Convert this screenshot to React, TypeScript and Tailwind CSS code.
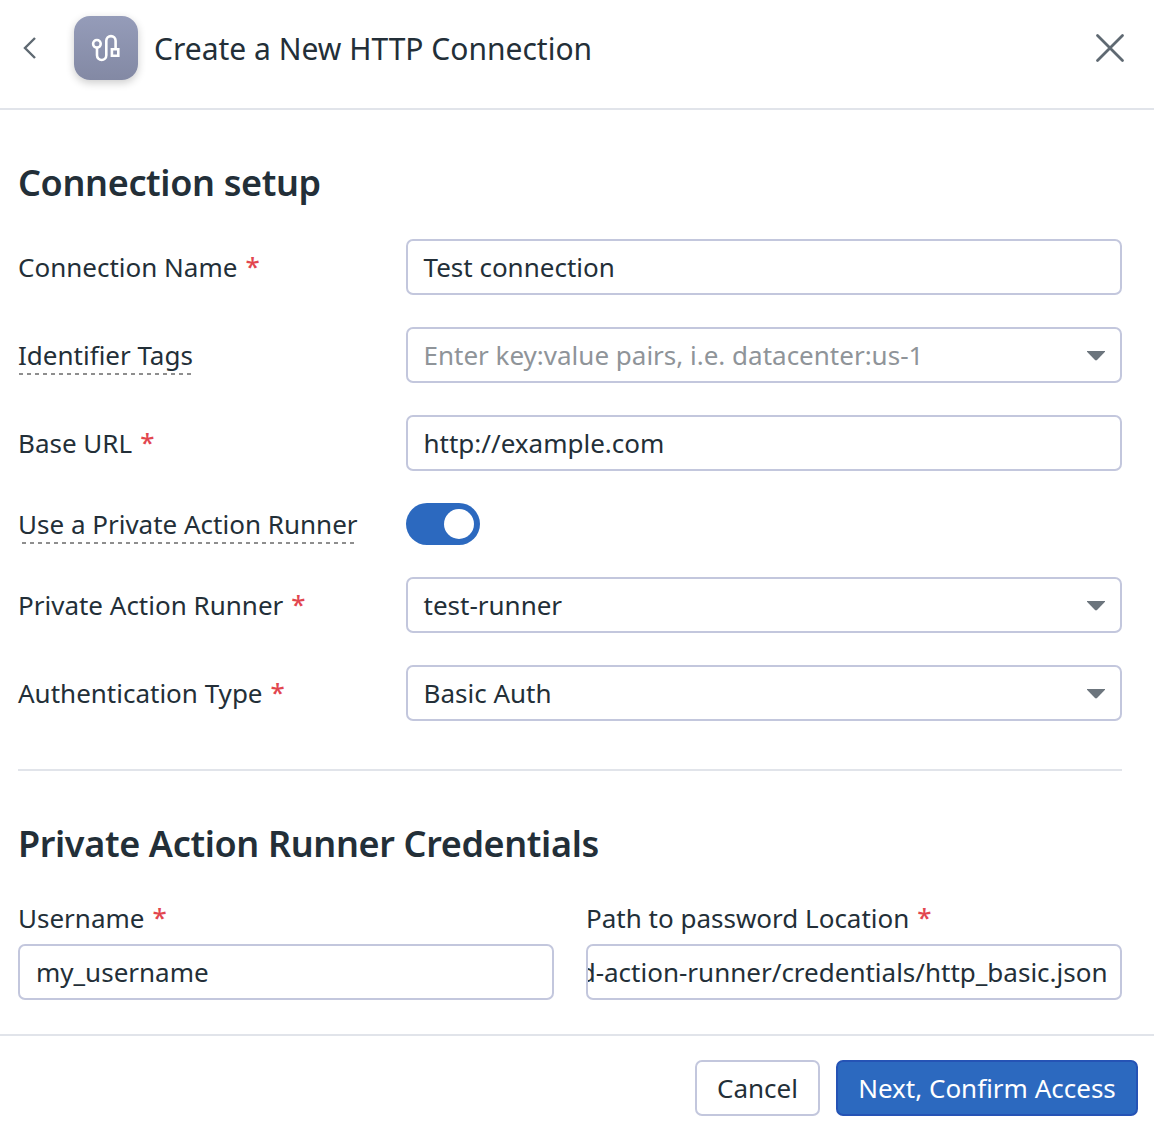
import type { ReactNode } from 'react'

const fieldBox =
  'flex h-14 items-center overflow-hidden rounded-[7px] border-2 border-[#c3c7dd] bg-white px-[15.5px] whitespace-nowrap'

function Required() {
  return <span className="relative -top-px ml-2 font-medium text-[#e2464f]">*</span>
}

function Caret() {
  return (
    <svg width="20" height="12" viewBox="0 0 20 12" className="relative top-px -mr-[1.5px] shrink-0">
      <path d="M1 1H19V1.8L11 10Q10 10.8 9 10L1 1.8Z" fill="#6c757d" />
    </svg>
  )
}

function Row({ label, children }: { label: ReactNode; children: ReactNode }) {
  return (
    <div className="flex items-center">
      <div className="w-[388px] shrink-0">{label}</div>
      <div className="min-w-0 flex-1">{children}</div>
    </div>
  )
}

function Select({ value, placeholder }: { value?: string; placeholder?: string }) {
  return (
    <div className={fieldBox}>
      <span className={value ? 'flex-1' : 'flex-1 text-[#8f9499]'}>{value ?? placeholder}</span>
      <Caret />
    </div>
  )
}

export default function App() {
  return (
    <div className="flex h-[1128px] w-[1154px] flex-col bg-white font-['Noto_Sans',sans-serif] text-[26px] leading-9 text-[#232f38]">
      <header className="flex h-[110px] items-start border-b-2 border-[#e1e4ea] pt-4">
        <svg width="16" height="24" viewBox="0 0 16 24" className="mt-5 ml-[22px]" fill="none" stroke="#5f6972" strokeWidth="2.4">
          <path d="M13 2L3 12L13 22" />
        </svg>
        <div className="ml-9 h-16 w-16 rounded-2xl bg-linear-to-b from-[#959cb9] to-[#8389a4] shadow-[0_3px_8px_rgba(0,0,0,0.2)]">
          <svg width="64" height="64" viewBox="0 0 64 64" fill="none" stroke="white" strokeWidth="2.6">
            <circle cx="22.9" cy="27.8" r="3.8" />
            <path d="M23 31.6V39.3A4.65 4.65 0 0 0 32.3 39.3V24.8A4.65 4.65 0 0 1 41.6 24.8V32.5" />
            <path d="M37.9 33.3H44.3V39.7H37.9Z" />
          </svg>
        </div>
        <h1 className="mt-[13px] ml-4 text-[30px] leading-10">Create a New HTTP Connection</h1>
        <svg width="32" height="32" viewBox="0 0 32 32" className="mt-4 mr-7 ml-auto" fill="none" stroke="#5f6972" strokeWidth="2.8" strokeLinecap="round">
          <path d="M3.5 3.5L28.5 28.5M28.5 3.5L3.5 28.5" />
        </svg>
      </header>

      <main className="flex-1 pr-8 pl-[18px]">
        <h2 className="mt-12 text-[36px] leading-[50px] font-semibold tracking-[-0.36px]">Connection setup</h2>
        <div className="mt-[31px] flex flex-col gap-8">
          <Row label={<>Connection Name<Required /></>}>
            <div className={fieldBox}>Test connection</div>
          </Row>
          <Row
            label={
              <span className="relative inline-block">
                Identifier Tags
                <span className="absolute right-0 bottom-[-2px] left-[1px] h-0.5 bg-[repeating-linear-gradient(90deg,#8e8e8e_0_4px,transparent_4px_8px)]" />
              </span>
            }
          >
            <Select placeholder="Enter key:value pairs, i.e. datacenter:us-1" />
          </Row>
          <Row label={<>Base URL<Required /></>}>
            <div className={fieldBox}>http://example.com</div>
          </Row>
          <Row
            label={
              <span className="relative inline-block">
                Use a Private Action Runner
                <span className="absolute right-0 bottom-[-2px] left-1 h-0.5 bg-[repeating-linear-gradient(90deg,#8e8e8e_0_4px,transparent_4px_8px)]" />
              </span>
            }
          >
            <div className="flex h-[42px] w-[74px] items-center justify-end rounded-full bg-[#2c69bf] pr-1.5">
              <div className="h-[30px] w-[30px] rounded-full bg-white" />
            </div>
          </Row>
          <Row label={<>Private Action Runner<Required /></>}>
            <Select value="test-runner" />
          </Row>
          <Row label={<>Authentication Type<Required /></>}>
            <Select value="Basic Auth" />
          </Row>
        </div>

        <hr className="mt-12 border-t-2 border-[#e1e4ea]" />

        <h2 className="mt-12 text-[36px] leading-[50px] font-semibold tracking-[-0.36px]">Private Action Runner Credentials</h2>
        <div className="mt-[31px] grid grid-cols-2 gap-8">
          <div>
            <div className="mb-2">Username<Required /></div>
            <div className={fieldBox}><span className="ml-[0.5px]">my_username</span></div>
          </div>
          <div>
            <div className="mb-2">Path to password Location<Required /></div>
            <div className="flex h-14 items-center justify-end overflow-hidden rounded-[7px] border-2 border-[#c3c7dd] pr-[12.5px] whitespace-nowrap">
              d-action-runner/credentials/http_basic.json
            </div>
          </div>
        </div>
      </main>

      <footer className="flex h-[94px] items-start justify-end gap-4 border-t-2 border-[#e1e4ea] pt-6 pr-4">
        <button className="h-14 w-[125px] rounded-[7px] border-2 border-[#c3c7dd]">Cancel</button>
        <button className="h-14 w-[302px] rounded-[7px] border-2 border-[#2553b5] bg-[#2c69bf] text-white">
          Next, Confirm Access
        </button>
      </footer>
    </div>
  )
}
